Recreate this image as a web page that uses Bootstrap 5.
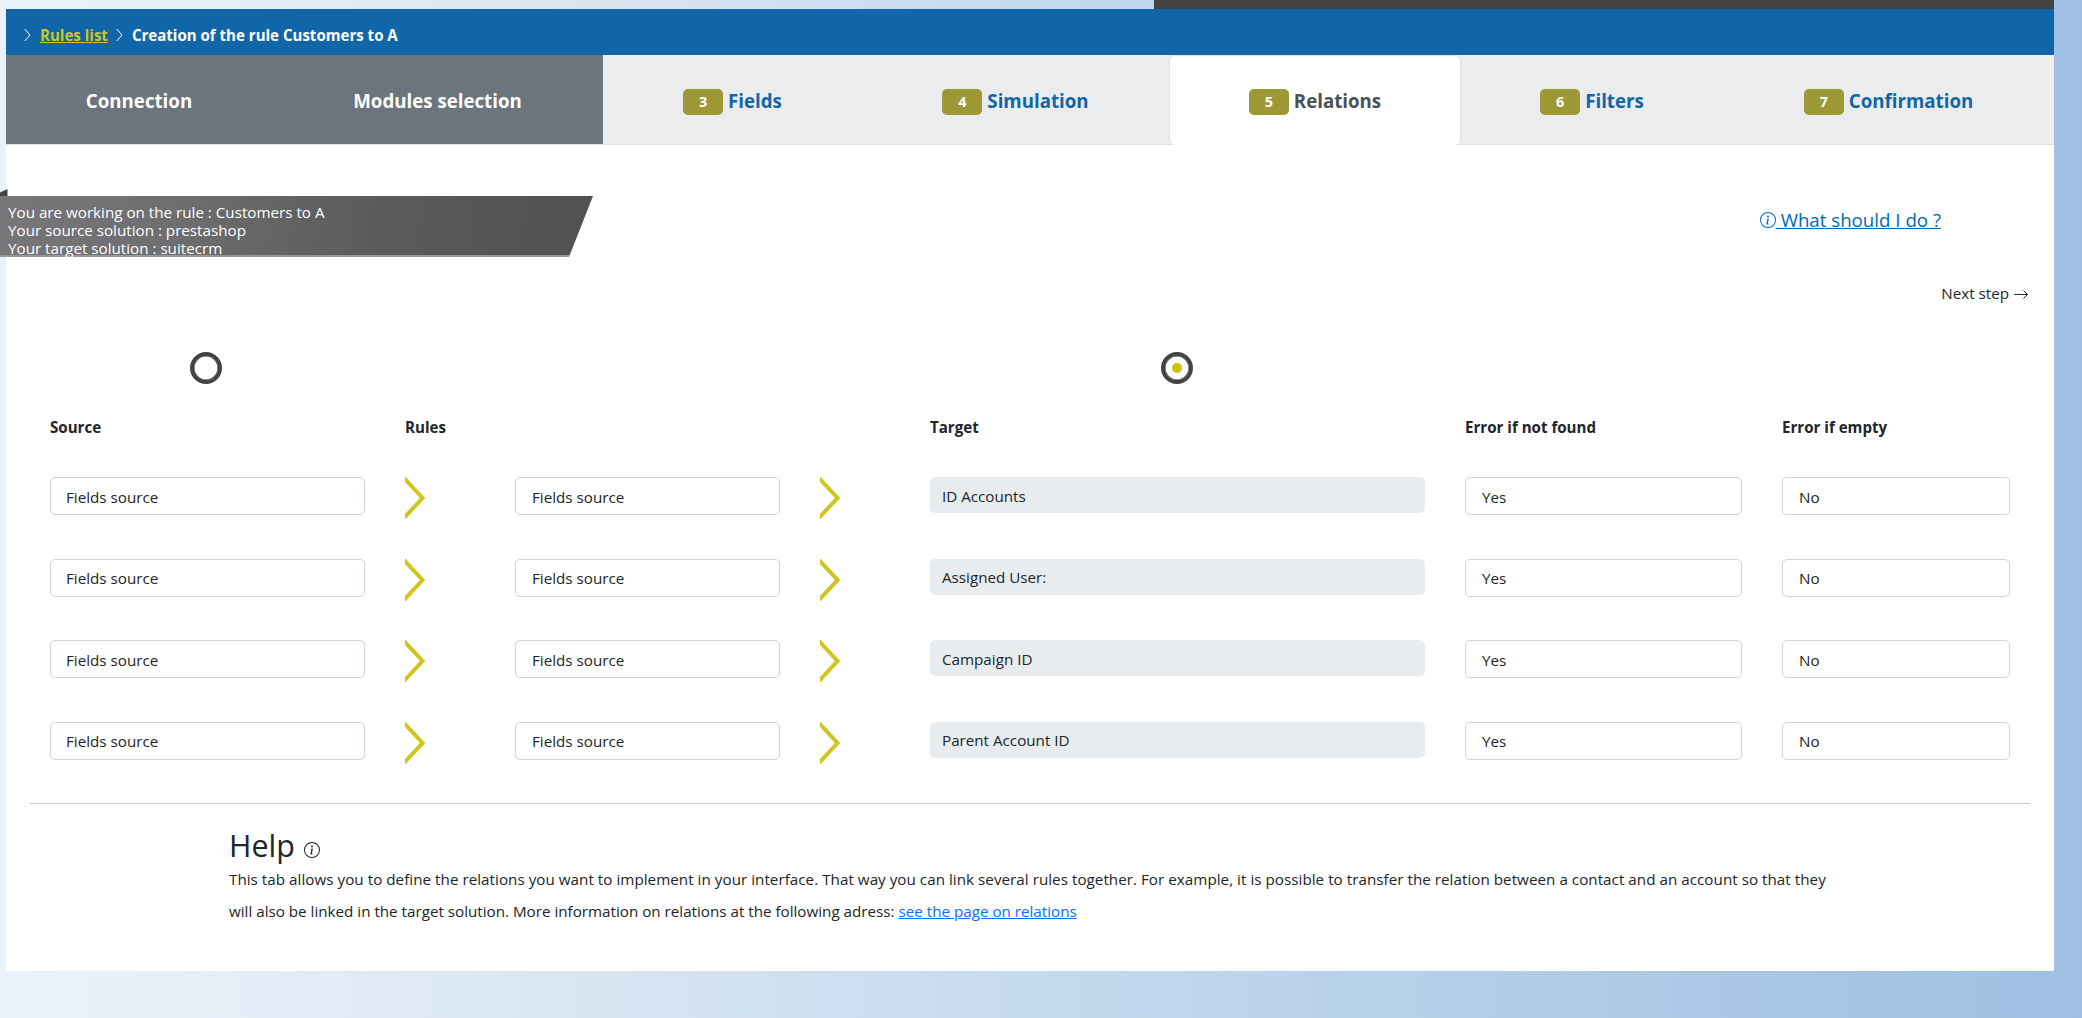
<!DOCTYPE html>
<html lang="en">
<head>
<meta charset="utf-8">
<title>Creation of the rule</title>
<link href="https://cdn.jsdelivr.net/npm/bootstrap@5.3.0/dist/css/bootstrap.min.css" rel="stylesheet">
<style>
body{font-family:"Open Sans","Noto Sans",sans-serif;font-size:15.2px;color:#212529;height:1018px;overflow:hidden;
background:linear-gradient(90deg,#eaf1fb 0%,#e3ecf6 15%,#d8e6f2 27%,#cfe0f1 38%,#c0d6ec 56%,#b1cee8 72%,#a8c6e5 85%,#a1c2e3 96%,#9fc0e3 100%)}
.top-strip{height:9px;width:900px;margin-left:1154px;background:#424143}
.rule-page{width:2048px;height:962px;margin-left:6px}
.crumbs{height:46px;background:#1066a9;padding:6px 0 0 18px;font-size:15.05px}
.crumbs a{color:#cfc41c;margin-left:9px}
.crumb-sep{margin:0 9px 0 8px}
.step-tabs{height:90px;background:#ebecee;font-size:18.7px;flex-wrap:nowrap}
.step-tabs .nav-link{height:90px;padding:2px 0 0;border-radius:6px;color:#1066a9;font-weight:700;white-space:nowrap}
.step-tabs .nav-link.active{color:#495057;height:90px;border-bottom:0;padding-top:1px}
.step-tabs .done-step{background:#6c757d;color:#fff;border:0;border-radius:0;height:89px;padding-top:4px}
.step-no{width:40px;height:26px;border-radius:5px;background:#9d9836;color:#fff;font-size:14.4px;margin:1px 5px 0 0}
.rule-info{margin:51px 0 0 -6px;width:593px;height:61px;padding:7px 0 0 8px;line-height:18px;color:#fff;background:linear-gradient(100deg,#777679 0%,#6e6d6f 30%,#5a5a5a 65%,#525152 100%);clip-path:polygon(0 0,100% 0,569px 100%,0 100%);border-bottom:2px solid #98989a}
.fold{position:absolute;left:0;top:189px}
.ask{margin:62px 113px 0 0;font-size:18.7px;line-height:26px;color:#0069b4}
.next-step{height:30px;margin-top:21px;padding-right:25px}
.map-marks{padding:44px 0 0 184px}
.ring{width:32px;height:32px;border:4px solid #434244;border-radius:50%;box-shadow:inset 0 0 0 .6px #434244}
.ring + .ring{margin-left:939px}
.dot{width:10px;height:10px;border-radius:50%;background:#cbc300}
.grid-line{display:grid;grid-template-columns:355px 110px 305px 110px 535px 317px 228px;margin-left:44px;height:81.6px}
.heads{padding-top:32px;height:93px;font-size:15.1px}
.rule-select{height:38px;border:1px solid #ced4da;border-radius:5px;padding:2px 0 0 16px}
.rule-target{height:36px;border-radius:5px;background:#e8ecef;padding:2px 0 0 12px}
.w-src{width:315px;padding-left:15px}.w-rule{width:265px}.w-tgt{width:495px}.w-nf{width:277px}.w-emp{width:228px}
.divider{margin:0 24px;height:1px;background:#c8c9cb}
.help-block{margin:23px 0 0 223px;width:1620px;line-height:32px}
.help-title{font-size:30.4px;line-height:38px;font-weight:400;margin:0 0 -2px}
.help-title svg{vertical-align:-1px;margin-left:1px}
.help-first{white-space:nowrap;font-size:15.2px;letter-spacing:.035px}
</style>
<script src="https://cdn.jsdelivr.net/npm/bootstrap@5.3.0/dist/js/bootstrap.bundle.min.js"></script>
</head>
<body>
<div class="top-strip"></div>
<main class="rule-page bg-white">
  <nav class="crumbs d-flex align-items-center text-white fw-bold">
    <svg width="7" height="14" viewBox="0 0 7 14" fill="none" stroke="#fff"><path d="M.7 1 6 7 .7 13"/></svg>
    <a href="#">Rules list</a>
    <svg class="crumb-sep" width="7" height="14" viewBox="0 0 7 14" fill="none" stroke="#fff"><path d="M.7 1 6 7 .7 13"/></svg>
    <span>Creation of the rule Customers to A</span>
  </nav>
  <ul class="nav nav-tabs step-tabs" id="steps"></ul>
  <svg class="fold" width="8" height="7"><path d="M0 3.5 7.5 0V7H0z" fill="#424143"/></svg>
  <div class="d-flex justify-content-between align-items-start">
    <div class="rule-info">You are working on the rule : Customers to A<br>Your source solution : prestashop<br>Your target solution : suitecrm</div>
    <a href="#" class="ask d-flex align-items-center text-decoration-none"><svg class="info-mark" width="16" height="16" viewBox="0 0 16 16" fill="currentColor"><path d="M8 15A7 7 0 1 1 8 1a7 7 0 0 1 0 14m0 1A8 8 0 1 0 8 0a8 8 0 0 0 0 16"/><path d="m8.930 6.588-2.290.287-.082.380.450.083c.294.070.352.176.288.469l-.738 3.468c-.194.897.105 1.319.808 1.319.545 0 1.178-.252 1.465-.598l.088-.416c-.200.176-.492.246-.686.246-.275 0-.375-.193-.304-.533zM9 4.500a1 1 0 1 1-2 0 1 1 0 0 1 2 0"/></svg><span class="text-decoration-underline">&nbsp;What should I do ?</span></a>
  </div>
  <div class="next-step d-flex justify-content-end align-items-center">Next step
    <svg class="ms-1 mt-1" width="16" height="16" viewBox="0 0 16 16" fill="none" stroke="#212529" stroke-linecap="round" stroke-linejoin="round"><path d="M1.500 7.500h13M10.800 3.800l3.700 3.700-3.700 3.700"/></svg>
  </div>
  <div class="map-marks d-flex">
    <div class="ring"></div>
    <div class="ring d-flex align-items-center justify-content-center"><div class="dot"></div></div>
  </div>
  <div class="grid-line heads fw-bold"><div>Source</div><div>Rules</div><div></div><div></div><div>Target</div><div>Error if not found</div><div>Error if empty</div></div>
  <div id="relations"></div>
  <div class="divider"></div>
  <section class="help-block">
    <h2 class="help-title">Help <svg id="help-mark" width="16" height="16" viewBox="0 0 16 16" fill="currentColor"></svg></h2>
    <div><span class="help-first">This tab allows you to define the relations you want to implement in your interface. That way you can link several rules together. For example, it is possible to transfer the relation between a contact and an account so that they</span><br>will also be linked in the target solution. More information on relations at the following adress: <a href="#">see the page on relations</a></div>
  </section>
</main>
<script>
const steps=[['Connection',266],['Modules selection',331],['Fields',259,3],['Simulation',307,4],['Relations',292,5],['Filters',262,6],['Confirmation',331,7]];
document.getElementById('steps').innerHTML=steps.map(([n,w,k])=>`<li class="nav-item flex-shrink-0" style="width:${w}px"><a class="nav-link d-flex align-items-center justify-content-center ${k?'':'done-step'} ${k===5?'active':''}">${k?`<span class="step-no d-flex align-items-center justify-content-center">${k}</span>`:''}${n}</a></li>`).join('');
const arrow='<svg width="21" height="42" viewBox="0 0 21 42" fill="none" stroke="#cfc51c" stroke-width="4"><path d="M-2 0 17.500 21-2 42"/></svg>';
const pick=(t,c)=>`<div><div class="rule-select d-flex align-items-center ${c}">${t}</div></div>`;
document.getElementById('relations').innerHTML=['ID Accounts','Assigned User:','Campaign ID','Parent Account ID'].map(t=>`<div class="grid-line">${pick('Fields source','w-src')}<div>${arrow}</div>${pick('Fields source','w-rule')}<div>${arrow}</div><div><div class="rule-target d-flex align-items-center w-tgt">${t}</div></div>${pick('Yes','w-nf')}${pick('No','w-emp')}</div>`).join('');
document.getElementById('help-mark').innerHTML=document.querySelector('.info-mark').innerHTML;
</script>
</body>
</html>
